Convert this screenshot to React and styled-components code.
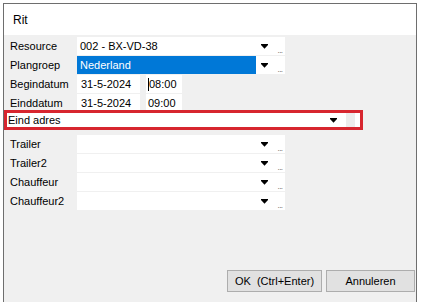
import React from 'react';
import styled, { createGlobalStyle } from 'styled-components';

const GlobalStyle = createGlobalStyle`
  html, body {
    margin: 0;
    padding: 0;
    background: #fff;
    overflow: hidden;
  }
  body {
    font-family: "Liberation Sans", Arial, sans-serif;
    font-size: 11px;
    color: #000;
  }
`;

const Page = styled.div`
  width: 422px;
  height: 302px;
  padding: 3px 0 0 3px;
  box-sizing: border-box;
  overflow: hidden;
`;

const Window = styled.div`
  width: 414px;
  height: 320px;
  box-sizing: border-box;
  border: 1px solid #6e6e6e;
  display: flex;
  flex-direction: column;
  background: #f0f0f0;
`;

const TitleBar = styled.div`
  height: 31px;
  background: #fff;
  display: flex;
  align-items: center;
  padding-left: 9px;
  font-size: 12px;
`;

const Body = styled.div`
  flex: 1;
  display: flex;
  flex-direction: column;
  padding-top: 2px;
`;

const Row = styled.div`
  display: flex;
  align-items: stretch;
  height: 18px;
  margin-bottom: ${(p) => p.$gap ?? 1}px;
  margin-left: 3px;
`;

const HighlightRow = styled.div`
  display: flex;
  align-items: stretch;
  height: 14px;
  width: 353px;
  margin-top: -3px;
  margin-bottom: 5px;
  border: 3px solid #d7262f;
  background: #fff;
`;

const Label = styled.div`
  width: ${(p) => p.$width || 67}px;
  padding-left: ${(p) => p.$pl ?? 3}px;
  display: flex;
  align-items: center;
  white-space: nowrap;
`;

const Combo = styled.div`
  width: ${(p) => p.$width || 208}px;
  display: flex;
  background: #fff;
`;

const ComboText = styled.div`
  flex: 1;
  display: flex;
  align-items: center;
  padding-left: 3px;
  background: ${(p) => (p.$selected ? '#0078d7' : '#fff')};
  color: ${(p) => (p.$selected ? '#fff' : '#000')};
`;

const ArrowBox = styled.div`
  width: ${(p) => p.$w || 14}px;
  display: flex;
  align-items: center;
  justify-content: flex-start;
  padding-left: ${(p) => p.$pl ?? 5}px;
  padding-top: 1px;
`;

const Dots = styled.div`
  width: 10px;
  display: flex;
  align-items: flex-end;
  justify-content: center;
  font-size: 8px;
  line-height: 8px;
  color: #555;
  letter-spacing: -0.5px;
`;

const GrayEnd = styled.div`
  width: 9px;
  background: #ececec;
`;

const Field = styled.div`
  width: ${(p) => p.$width}px;
  margin-right: ${(p) => p.$mr || 0}px;
  background: #fff;
  display: flex;
  align-items: center;
  padding-left: ${(p) => p.$pl ?? 4}px;
  box-sizing: border-box;
`;

const Caret = styled.span`
  display: inline-block;
  width: 1px;
  height: 13px;
  background: #000;
`;

const Spacer = styled.div`
  flex: 1;
`;

const Footer = styled.div`
  display: flex;
  gap: 4px;
  padding: 0 0 0 223px;
  margin-bottom: 30px;
`;

const Button = styled.button`
  height: 22px;
  width: ${(p) => p.$width}px;
  background: #e1e1e1;
  border: 1px solid #adadad;
  font-family: "Liberation Sans", Arial, sans-serif;
  font-size: 11px;
  color: #000;
  padding: 0;
  white-space: pre;
`;

function DropArrow() {
  return (
    <svg width="7" height="5" viewBox="0 0 7 5">
      <rect x="0" y="0" width="7" height="1" fill="#000" />
      <polygon points="0,1 7,1 3.5,4.8" fill="#000" />
    </svg>
  );
}

function ComboRow({ label, value, selected, gap }) {
  return (
    <Row $gap={gap}>
      <Label>{label}</Label>
      <Combo>
        <ComboText $selected={selected}>{value}</ComboText>
        <ArrowBox>
          <DropArrow />
        </ArrowBox>
        <Dots>...</Dots>
      </Combo>
    </Row>
  );
}

function DateRow({ label, date, time, caret, gap }) {
  return (
    <Row $gap={gap}>
      <Label>{label}</Label>
      <Field $width={63} $mr={6} $pl={4}>{date}</Field>
      <Field $width={36} $pl={2}>
        {caret && <Caret />}
        {time}
      </Field>
    </Row>
  );
}

export default function App() {
  return (
    <>
      <GlobalStyle />
      <Page>
        <Window>
          <TitleBar>Rit</TitleBar>
          <Body>
            <ComboRow label="Resource" value="002 - BX-VD-38" />
            <ComboRow label="Plangroep" value="Nederland" selected />
            <DateRow label="Begindatum" date="31-5-2024" time="08:00" caret />
            <DateRow label="Einddatum" date="31-5-2024" time="09:00" />
            <HighlightRow>
              <Label $width={70} $pl={1}>Eind adres</Label>
              <Combo $width={268}>
                <ComboText />
                <ArrowBox $w={16} $pl={4}>
                  <DropArrow />
                </ArrowBox>
              </Combo>
              <GrayEnd />
            </HighlightRow>
            <ComboRow label="Trailer" value="" />
            <ComboRow label="Trailer2" value="" />
            <ComboRow label="Chauffeur" value="" />
            <ComboRow label="Chauffeur2" value="" />
            <Spacer />
            <Footer>
              <Button $width={95}>{'OK  (Ctrl+Enter)'}</Button>
              <Button $width={89}>Annuleren</Button>
            </Footer>
          </Body>
        </Window>
      </Page>
    </>
  );
}
